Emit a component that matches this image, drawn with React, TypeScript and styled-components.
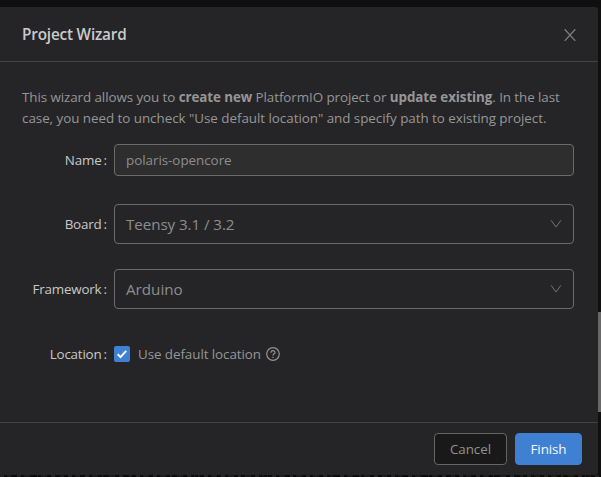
import React from "react";
import styled, { createGlobalStyle } from "styled-components";

const Global = createGlobalStyle`
  *, *::before, *::after { box-sizing: border-box; }
  html, body { margin: 0; height: 477px; overflow: hidden; background: #0f0f0f; }
  body { font: 13.4px/21px "Open Sans", "Noto Sans", sans-serif; color: #969697; }
`;

const Screen = styled.div`
  display: grid;
  grid-template-columns: 598px 3px;
  grid-template-rows: 468px 2px;
  width: 601px;
  height: 477px;
  padding-top: 7px;
`;

const Dialog = styled.section`
  display: flex;
  flex-direction: column;
  background: #252527;
  border-radius: 0 3px 3px 0;
`;

const Header = styled.header`
  display: flex;
  align-items: center;
  justify-content: space-between;
  height: 55px;
  padding: 0 22px;
  border-bottom: 1px solid #444445;
`;

const Line = styled.span<{ $spacing?: number }>`
  display: block;
  white-space: nowrap;
  letter-spacing: ${({ $spacing = 0 }) => $spacing}px;
`;

const Title = styled.h1`
  margin: 0;
  font-size: 15.3px;
  line-height: 22px;
  font-weight: 650;
  letter-spacing: -0.18px;
  color: #cacacb;
`;

const CloseButton = styled.button`
  display: flex;
  padding: 2px 0 0;
  border: 0;
  background: none;
  color: #7d7d7e;
`;

const Body = styled.main`
  flex: 1;
  padding: 25px 24px 0 22px;
`;

const Intro = styled.p`
  margin: 0 0 15px;
  strong { font-weight: 700; }
`;

const Row = styled.div<{ $height: number; $gap?: number }>`
  display: grid;
  grid-template-columns: 85px 460px;
  column-gap: 7px;
  align-items: center;
  height: ${({ $height }) => $height}px;
  margin-bottom: ${({ $gap = 0 }) => $gap}px;
`;

const Label = styled.label`
  text-align: right;
  white-space: nowrap;
  font-weight: 500;
  color: #c8c8c9;
  letter-spacing: -0.2px;
  &::after { content: ":"; margin-left: 2px; letter-spacing: 0; }
`;

const TextField = styled.input`
  width: 100%;
  height: 32px;
  padding: 0 11px;
  border: 1px solid #6b6b6b;
  border-radius: 4px;
  outline: 0;
  background: #2e2e2e;
  color: #8d8d8d;
  font: inherit;
  letter-spacing: -0.03px;
`;

const SelectBox = styled.div`
  display: flex;
  align-items: center;
  justify-content: space-between;
  height: 40px;
  padding: 0 11px;
  border: 1px solid #6b6b6b;
  border-radius: 4px;
  font-size: 15.2px;
  color: #8d8d8e;
`;

const CheckLine = styled.div`
  display: flex;
  align-items: center;
`;

const Checkbox = styled.span`
  display: flex;
  width: 16px;
  height: 16px;
  margin-right: 8px;
  border-radius: 2px;
  background: #3f80d2;
`;

const HelpIcon = styled.svg`
  margin-left: 5px;
`;

const Footer = styled.footer`
  display: flex;
  justify-content: flex-end;
  gap: 8px;
  height: 53px;
  padding: 10px 16px;
  border-top: 1px solid #414142;
`;

const Button = styled.button<{ $primary?: boolean }>`
  width: ${({ $primary }) => ($primary ? 67 : 73)}px;
  height: 32px;
  padding: 0;
  border: 1px solid ${({ $primary }) => ($primary ? "#3f80d2" : "#656565")};
  border-radius: 4px;
  background: ${({ $primary }) => ($primary ? "#3f80d2" : "#191919")};
  color: ${({ $primary }) => ($primary ? "#f4f8fd" : "#929292")};
  font: inherit;
  letter-spacing: ${({ $primary }) => ($primary ? -0.1 : -0.03)}px;
`;

const ScrollTrack = styled.aside`
  padding-top: 305px;
  background: #10100f;
`;

const ScrollThumb = styled.div`
  height: 100px;
  background: #696868;
`;

const PageEdge = styled.div`
  grid-column: 1 / 3;
  background:
    repeating-linear-gradient(90deg, transparent 0 11px, #0d0c0c 11px 14px, transparent 14px 23px),
    repeating-linear-gradient(90deg, #242322 0 4px, #0d0c0c 4px 7px, #1c1c1c 7px 13px, #0b0b0b 13px 17px);
`;

const Chevron = () => (
  <svg width="12" height="12" viewBox="0 0 12 12" fill="none" stroke="#747475" strokeWidth="1">
    <path d="M1.1 2.3 6 9 10.9 2.3" />
  </svg>
);

export default function App() {
  return (
    <>
      <Global />
      <Screen>
        <Dialog role="dialog" aria-label="Project Wizard">
          <Header>
            <Title>Project Wizard</Title>
            <CloseButton aria-label="Close">
              <svg width="12" height="14" viewBox="0 0 12 14" fill="none" stroke="currentColor" strokeWidth="1.3">
                <path d="m.7 1.3 10.6 11.6M11.3 1.3.7 12.9" />
              </svg>
            </CloseButton>
          </Header>
          <Body>
            <Intro>
              <Line $spacing={-0.08}>
                This wizard allows you to <strong>create new</strong> PlatformIO project or <strong>update existing</strong>. In the last
              </Line>
              <Line $spacing={-0.035}>case, you need to uncheck "Use default location" and specify path to existing project.</Line>
            </Intro>
            <Row $height={32} $gap={28}>
              <Label>Name</Label>
              <TextField defaultValue="polaris-opencore" aria-label="Name" />
            </Row>
            <Row $height={40} $gap={25}>
              <Label>Board</Label>
              <SelectBox><Line $spacing={-0.08}>Teensy 3.1 / 3.2</Line><Chevron /></SelectBox>
            </Row>
            <Row $height={40} $gap={29}>
              <Label>Framework</Label>
              <SelectBox><Line>Arduino</Line><Chevron /></SelectBox>
            </Row>
            <Row $height={32}>
              <Label>Location</Label>
              <CheckLine>
                <Checkbox>
                  <svg width="16" height="16" viewBox="0 0 16 16" fill="none" stroke="#fff" strokeWidth="2">
                    <path d="m3.7 8.2 2.8 2.9 5.7-6.3" />
                  </svg>
                </Checkbox>
                <Line $spacing={-0.07}>Use default location</Line>
                <HelpIcon width="14" height="14" viewBox="0 0 14 14" fill="none" stroke="#929293" strokeWidth="1.2">
                  <circle cx="7" cy="7" r="6.3" />
                  <path d="M5 5.7c0-2.7 4-2.7 4-.2 0 1.4-2 1.3-2 3" />
                  <path d="M7 9.7v1.2" />
                </HelpIcon>
              </CheckLine>
            </Row>
          </Body>
          <Footer>
            <Button>Cancel</Button>
            <Button $primary>Finish</Button>
          </Footer>
        </Dialog>
        <ScrollTrack><ScrollThumb /></ScrollTrack>
        <PageEdge />
      </Screen>
    </>
  );
}
